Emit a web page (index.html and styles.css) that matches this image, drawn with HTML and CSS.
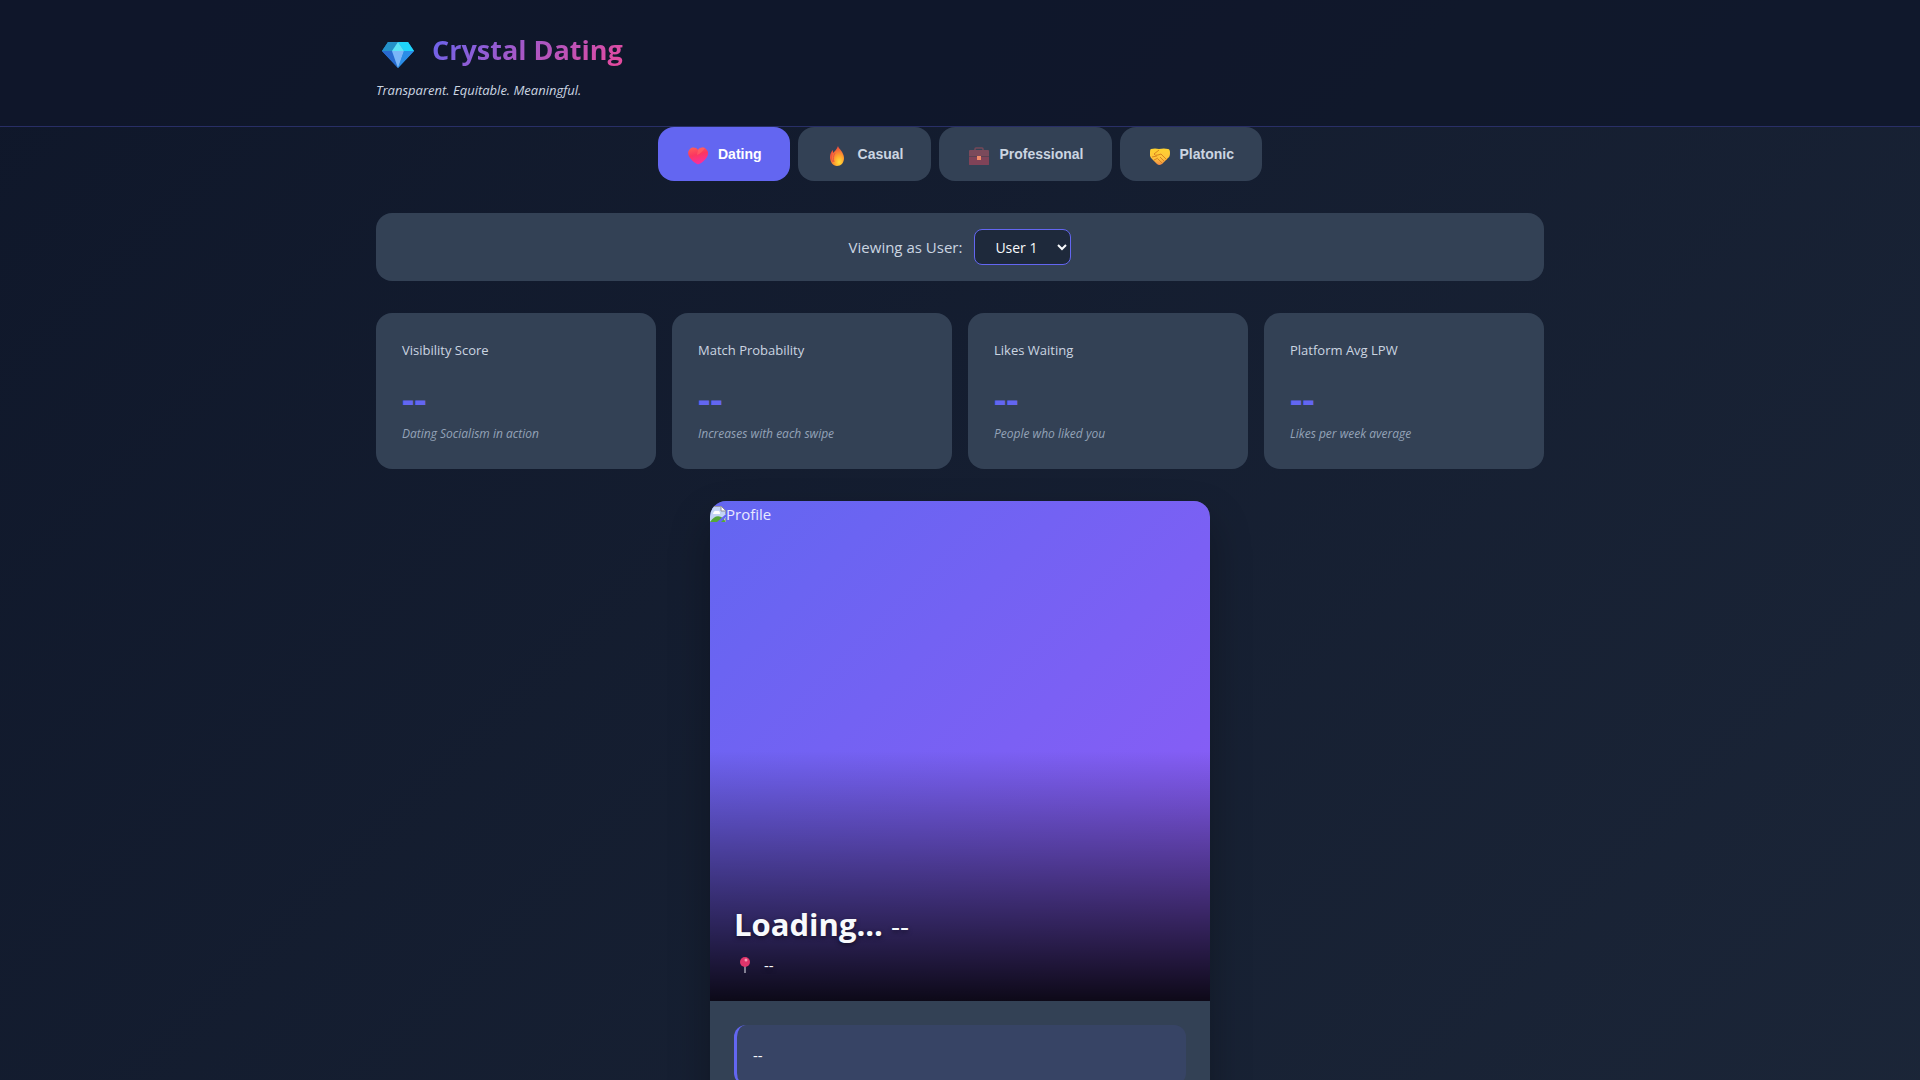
FILE: index.html
```html
<!DOCTYPE html>
<html lang="en">
<head>
<meta charset="utf-8">
<meta name="viewport" content="width=device-width, initial-scale=1">
<title>Crystal Dating</title>
<link rel="stylesheet" href="styles.css">
</head>
<body>
<header class="header">
  <div class="container">
    <div class="brand">
      <svg class="brand-icon" viewBox="0 0 32 26" aria-hidden="true">
        <path d="M6 0h20l6 9-16 17L0 9z" fill="#2490e0"/>
        <path d="M6 0h10L10 9H0z" fill="#2491c8"/>
        <path d="M16 0h10l6 9H22z" fill="#1fd5fa"/>
        <path d="M16 0l6 9H10z" fill="#5ce3f5"/>
        <path d="M0 9h10l6 17z" fill="#2869cf"/>
        <path d="M10 9h12l-6 17z" fill="#79b5f8"/>
        <path d="M22 9h10L16 26z" fill="#2b8ce6"/>
      </svg>
      <h1 class="brand-name">Crystal Dating</h1>
    </div>
    <p class="tagline">Transparent. Equitable. Meaningful.</p>
  </div>
</header>

<main class="container">
  <nav class="modes" aria-label="Mode">
    <button type="button" class="mode mode-active">
      <svg class="mode-icon" viewBox="0 0 20 20" aria-hidden="true">
        <defs><linearGradient id="heart" x1="0" y1="0" x2="0.3" y2="1"><stop offset="0" stop-color="#ff6158"/><stop offset="0.5" stop-color="#fb3760"/><stop offset="1" stop-color="#f92f9b"/></linearGradient></defs>
        <path d="M10 4C8 1 4 1 2 3-1 6 0 9 2 12c2 3 5 5 7 6q1 .6 2 0c3-1 6-4 8-7 2-4 1-6-1-8-2-2-6-2-8 1z" fill="url(#heart)"/>
        <path d="M10 4c2-3 5-3 7-2-2 3-5 6-8 7z" fill="#ff6865" opacity=".6"/>
      </svg>Dating
    </button>
    <button type="button" class="mode">
      <svg class="mode-icon" viewBox="0 0 20 20" aria-hidden="true">
        <defs><radialGradient id="flame" cx="0.65" cy="0.8" r="0.7"><stop offset="0" stop-color="#ffe03a"/><stop offset="0.45" stop-color="#ffa62d"/><stop offset="1" stop-color="#f0533c"/></radialGradient></defs>
        <path d="M10 0c0 2 6 6 6 12 0 5-3 8-7 8s-7-4-7-9c0-3 1-5 3-7v3c2-2 4-4 5-7z" fill="url(#flame)"/>
        <path d="M4 8c-1 3-1 5 1 8M7 7c-2 3-2 6-1 9" fill="none" stroke="#ec5540"/>
      </svg>Casual
    </button>
    <button type="button" class="mode">
      <svg class="mode-icon" viewBox="0 0 20 20" aria-hidden="true">
        <path d="M6 5V3q0-1 1-1h6q1 0 1 1v2" fill="none" stroke="#764858" stroke-width="1.5"/>
        <rect y="4" width="20" height="15" rx="1" fill="#7b4a5b"/>
        <path d="M0 11h20v7q0 1-1 1H1q-1 0-1-1z" fill="#804358"/>
        <path d="M0 10.500h20" stroke="#5c4252"/>
        <rect x="8" y="10" width="4" height="4" fill="#f08a68"/>
      </svg>Professional
    </button>
    <button type="button" class="mode">
      <svg class="mode-icon" viewBox="0 0 20 20" aria-hidden="true">
        <defs><linearGradient id="hands" x1="0" y1="0" x2="0" y2="1"><stop offset="0" stop-color="#ffd22f"/><stop offset="0.6" stop-color="#ffc33c"/><stop offset="1" stop-color="#f18a45"/></linearGradient></defs>
        <path d="M1 3q4-1 8 0 5-1 9 0 2 0 2 4 0 4-2 5l-6 6q-3 2-5 0l-5-5Q-1 10 0 6q0-3 1-3z" fill="url(#hands)"/>
        <path d="M9 4L4 8q1 2 4 1l3-1 6 6M10 11l4 4M8 13l4 4M2 11l5-1M4 14l4-2" fill="none" stroke="#d98520"/>
      </svg>Platonic
    </button>
  </nav>

  <section class="viewer">
    <label for="user">Viewing as User:</label>
    <select id="user" class="viewer-select">
      <option>User 1</option>
      <option>User 2</option>
      <option>User 3</option>
    </select>
  </section>

  <section class="stats">
    <article class="stat">
      <h2 class="stat-label">Visibility Score</h2>
      <p class="stat-value">--</p>
      <p class="stat-note">Dating Socialism in action</p>
    </article>
    <article class="stat">
      <h2 class="stat-label">Match Probability</h2>
      <p class="stat-value">--</p>
      <p class="stat-note">Increases with each swipe</p>
    </article>
    <article class="stat">
      <h2 class="stat-label">Likes Waiting</h2>
      <p class="stat-value">--</p>
      <p class="stat-note">People who liked you</p>
    </article>
    <article class="stat">
      <h2 class="stat-label">Platform Avg LPW</h2>
      <p class="stat-value">--</p>
      <p class="stat-note">Likes per week average</p>
    </article>
  </section>

  <article class="profile">
    <div class="photo">
      <div class="photo-alt">
        <svg class="photo-missing" viewBox="0 0 16 16" aria-hidden="true">
          <path d="M0 0h11l5 5v11H0z" fill="#c3d4f5"/>
          <path d="M3 8q1-4 4-3 3-1 3 3z" fill="#fff"/>
          <path d="M0 16q6-9 13-4l3 4z" fill="#54a836"/>
          <path d="M11 0v5h5z" fill="#fff" stroke="#8d8d9c"/>
          <path d="M7 16L16 8v3l-5 5z" fill="#6366f1"/>
          <path d="M0 .5h11M15.500 5v3M15.500 12v4" stroke="#9a9aa8"/>
        </svg>Profile
      </div>
      <div class="photo-caption">
        <h2 class="name">Loading... <span class="age">--</span></h2>
        <p class="place">
          <svg class="pin" viewBox="0 0 10 16" aria-hidden="true">
            <rect x="4" y="8" width="2" height="8" fill="#827f92"/>
            <circle cx="5" cy="5" r="5" fill="#df356b"/>
            <circle cx="6" cy="3" r="1.500" fill="#fa9ab5"/>
          </svg>--
        </p>
      </div>
    </div>
    <div class="details">
      <p class="bio">--</p>
    </div>
  </article>
</main>
</body>
</html>
```
FILE: styles.css
```css
* {
  box-sizing: border-box;
  margin: 0;
  padding: 0;
}

body {
  min-height: 100vh;
  background: linear-gradient(135deg, #0f172a 0%, #1e293b 125%);
  color: #f8fafc;
  font-family: "Segoe UI", "Open Sans", "Noto Sans", sans-serif;
  font-size: 15px;
  line-height: 24px;
}

.container {
  max-width: 1200px;
  margin: 0 auto;
  padding: 0 16px;
}

.header {
  padding: 24px 0;
  background: rgba(15, 23, 42, 0.8);
  border-bottom: 1px solid rgba(99, 102, 241, 0.3);
}

.brand {
  display: flex;
  align-items: center;
  gap: 18px;
  padding-left: 6px;
}

.brand-icon {
  width: 32px;
  height: 26px;
  margin-top: 10px;
}

.brand-name {
  background: linear-gradient(135deg, #6366f1, #ec4899);
  background-clip: text;
  -webkit-background-clip: text;
  color: transparent;
  font-size: 27px;
  line-height: 52px;
}

.tagline {
  margin-top: 2px;
  color: #cbd5e1;
  font-size: 13px;
  font-style: italic;
  font-weight: 500;
  line-height: 24px;
}

.modes {
  display: flex;
  justify-content: center;
  gap: 8px;
  margin-bottom: 32px;
}

.mode {
  display: flex;
  align-items: center;
  gap: 10px;
  height: 54px;
  padding: 0 28px 0 30px;
  border: 0;
  border-radius: 16px;
  background: #334155;
  color: #cbd5e1;
  font: bold 14px "Liberation Sans", Arial, sans-serif;
}

.mode-active {
  background: #6366f1;
  color: #fff;
}

.mode-icon {
  width: 20px;
  height: 20px;
  margin-top: 3px;
}

.viewer {
  display: flex;
  justify-content: center;
  align-items: center;
  gap: 12px;
  margin-bottom: 32px;
  padding: 16px;
  border-radius: 16px;
  background: #334155;
  color: #cbd5e1;
}

.viewer-select {
  width: 97px;
  height: 36px;
  padding: 0 0 0 16px;
  border: 1px solid #6366f1;
  border-radius: 8px;
  background: #1e293b;
  color: #f8fafc;
  font: 14px "Segoe UI", "Open Sans", sans-serif;
}

.stats {
  display: grid;
  grid-template-columns: repeat(auto-fit, minmax(250px, 1fr));
  gap: 16px;
  margin-bottom: 32px;
}

.stat {
  padding: 26px;
  border-radius: 16px;
  background: #334155;
}

.stat-label {
  color: #cbd5e1;
  font-size: 13px;
  font-weight: normal;
  line-height: 22px;
}

.stat-value {
  margin-top: 12px;
  color: #6366f1;
  font-size: 38px;
  font-weight: bold;
  line-height: 51px;
}

.stat-note {
  color: #94a3b8;
  font-size: 12px;
  font-style: italic;
  line-height: 19px;
}

.profile {
  max-width: 500px;
  margin: 0 auto;
  border-radius: 16px;
  background: #334155;
  box-shadow: 0 20px 40px rgba(0, 0, 0, 0.3);
  overflow: hidden;
}

.photo {
  display: flex;
  flex-direction: column;
  justify-content: space-between;
  height: 500px;
  background:
    linear-gradient(to bottom, transparent 50%, rgba(0, 0, 0, 0.9) 100%),
    linear-gradient(135deg, #6366f1 0%, #8b5cf6 90%);
}

.photo-alt {
  display: flex;
  height: 26px;
  align-items: center;
  color: #e8e9ff;
}

.photo-missing {
  width: 16px;
  height: 16px;
}

.photo-caption {
  padding: 24px;
  text-shadow: 0 2px 4px rgba(0, 0, 0, 0.5);
}

.name {
  margin-bottom: 4px;
  font-size: 31px;
  line-height: 48px;
}

.age {
  font-size: 28px;
  font-weight: normal;
}

.place {
  display: flex;
  align-items: center;
  gap: 14px;
  padding-left: 6px;
}

.pin {
  width: 10px;
  height: 16px;
}

.details {
  padding: 24px;
}

.bio {
  padding: 18px 16px;
  border-left: 3px solid #6366f1;
  border-radius: 12px;
  background: rgba(99, 102, 241, 0.1);
}
```
